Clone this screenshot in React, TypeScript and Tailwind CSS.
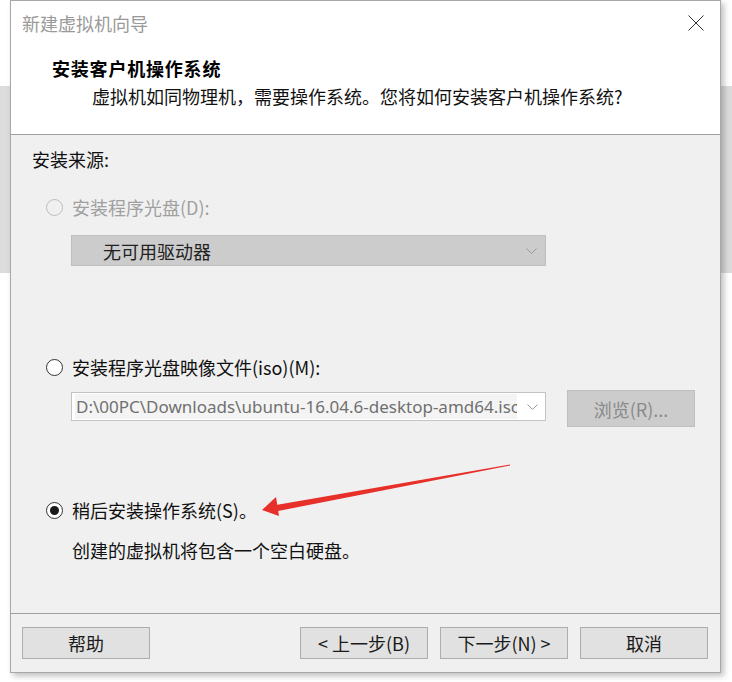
import React from "react";

const CJK = "font-['Noto_Sans_CJK_SC','Noto_Sans',sans-serif]";

function Radio({ checked = false, disabled = false }: { checked?: boolean; disabled?: boolean }) {
  return (
    <div
      className={`w-[17px] h-[17px] rounded-full border flex items-center justify-center shrink-0 ${
        disabled ? "border-[#bcbcbc] bg-[#f0f0f0]" : "border-[#333333] bg-white"
      }`}
    >
      {checked && <div className="w-[9px] h-[9px] rounded-full bg-[#1a1a1a]" />}
    </div>
  );
}

function Chevron({ color }: { color: string }) {
  return (
    <svg width="11" height="6" viewBox="0 0 11 6" className="shrink-0">
      <path d="M0.5 0.5 L5.5 5.5 L10.5 0.5" fill="none" stroke={color} strokeWidth="1" />
    </svg>
  );
}

function Btn({ children }: { children: React.ReactNode }) {
  return (
    <div className="w-[128px] h-[32px] bg-[#e1e1e1] border border-[#adadad] flex items-center justify-center text-[18px] text-[#1a1a1a] leading-none">
      {children}
    </div>
  );
}

export default function App() {
  return (
    <div className={`relative w-[732px] h-[682px] bg-white overflow-hidden ${CJK}`}>
      {/* background band behind window */}
      <div className="absolute left-0 top-[86px] w-full h-[187px] bg-[#dcdcdc]" />

      {/* window */}
      <div className="absolute left-[10px] top-0 w-[711px] h-[673px] border border-[#a8a8a8] bg-[#f0f0f0] flex flex-col shadow-[3px_3px_6px_rgba(0,0,0,0.25)]">
        {/* header */}
        <div className="h-[134px] bg-white border-b border-[#a0a0a0] flex flex-col shrink-0">
          <div className="h-[44px] flex items-center justify-between pl-[11px] pr-[16px]">
            <span className="text-[18px] leading-[24px] text-[#999999]">新建虚拟机向导</span>
            <svg width="16" height="16" viewBox="0 0 16 16">
              <path d="M0.5 0.5 L15.5 15.5 M15.5 0.5 L0.5 15.5" stroke="#333" strokeWidth="1" />
            </svg>
          </div>
          <div className="mt-[11px] pl-[41px] text-[18px] leading-[24px] font-bold tracking-[0.8px] text-black">安装客户机操作系统</div>
          <div className="mt-[4px] pl-[81px] text-[18px] leading-[24px] text-[#111]">
            虚拟机如同物理机，需要操作系统。您将如何安装客户机操作系统?
          </div>
        </div>

        {/* body */}
        <div className="flex-1 flex flex-col pt-[12px] text-[18px] leading-[24px]">
          <div className="pl-[21px] text-[#111]">安装来源:</div>

          <div className="mt-[24px] pl-[35px] flex items-center gap-[9px]">
            <Radio disabled />
            <span className="text-[#a0a0a0]">安装程序光盘(D):</span>
          </div>

          <div className="mt-[16px] ml-[60px] w-[475px] h-[31px] bg-[#cccccc] border border-[#bfbfbf] flex items-center justify-between pl-[31px] pr-[8px]">
            <span className="text-[#222]">无可用驱动器</span>
            <Chevron color="#9a9a9a" />
          </div>

          <div className="mt-[89px] pl-[35px] flex items-center gap-[9px]">
            <Radio />
            <span className="text-[#111]">安装程序光盘映像文件(iso)(M):</span>
          </div>

          <div className="mt-[11px] ml-[60px] flex items-start">
            <div className="mt-[2px] w-[475px] h-[29px] bg-white border border-[#c4c4c4] flex items-center justify-between pr-[7px]">
              <div className="ml-[3px] w-[442px] h-[25px] bg-[#f4f4f4] overflow-hidden whitespace-nowrap text-[#707070] text-[17px] leading-[25px] font-['Noto_Sans',sans-serif] pl-[1px]">
                D:\00PC\Downloads\ubuntu-16.04.6-desktop-amd64.iso
              </div>
              <Chevron color="#9a9a9a" />
            </div>
            <div className="ml-[21px] w-[128px] h-[37px] bg-[#cccccc] border border-[#bfbfbf] flex items-center justify-center text-[#8a8a8a]">
              浏览(R)...
            </div>
          </div>

          <div className="mt-[71px] pl-[35px] flex items-center gap-[9px]">
            <Radio checked />
            <span className="text-[#111]">稍后安装操作系统(S)。</span>
          </div>

          <div className="mt-[16px] pl-[61px] text-[#111]">创建的虚拟机将包含一个空白硬盘。</div>
        </div>

        {/* footer */}
        <div className="h-[59px] border-t border-[#a0a0a0] shrink-0 flex items-start pt-[13px] pl-[11px] pr-[12px]">
          <Btn>帮助</Btn>
          <div className="flex-1" />
          <div className="flex gap-[12px]">
            <Btn>&lt; 上一步(B)</Btn>
            <Btn>下一步(N) &gt;</Btn>
            <Btn>取消</Btn>
          </div>
        </div>
      </div>

      {/* red annotation arrow */}
      <svg className="absolute left-0 top-0 pointer-events-none" width="732" height="682" viewBox="0 0 732 682">
        <polygon points="510,464.5 510,465.5 278,511 276,505" fill="#e8302a" />
        <polygon points="262,510 276,497 279,516" fill="#e8302a" />
      </svg>
    </div>
  );
}
